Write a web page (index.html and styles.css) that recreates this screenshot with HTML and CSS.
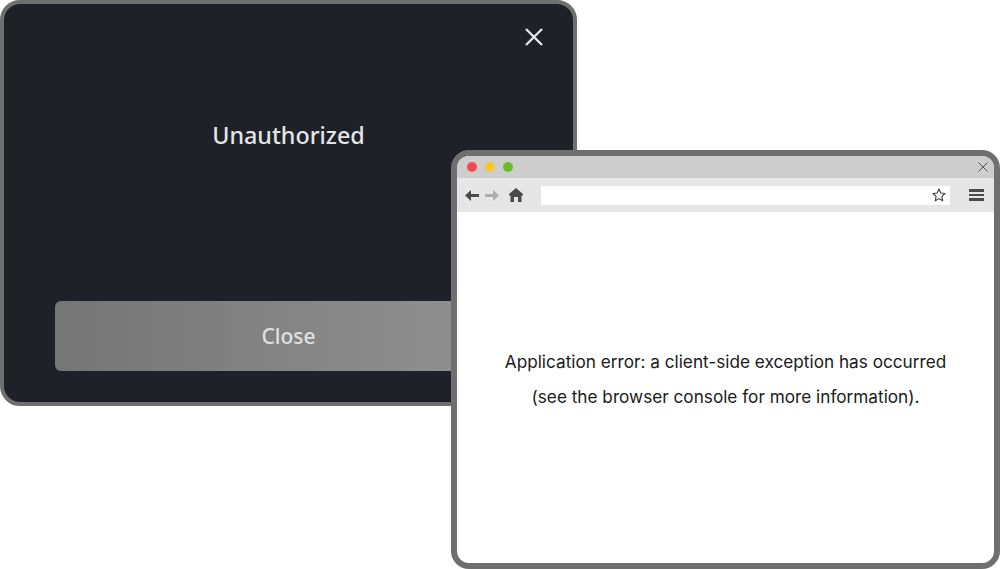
FILE: index.html
```html
<!DOCTYPE html>
<html lang="en">
<head>
<meta charset="utf-8">
<title>Application error</title>
<link rel="stylesheet" href="styles.css">
</head>
<body>
<div class="canvas">
  <section class="dialog">
    <div class="dialog-top">
      <span class="dialog-close">
        <svg width="20" height="20" viewBox="0 0 20 20"><path d="M2 2 18 18M18 2 2 18" stroke="#e4e5e6" stroke-width="2.4" fill="none"/></svg>
      </span>
    </div>
    <p class="dialog-title">Unauthorized</p>
    <button class="dialog-button">Close</button>
  </section>
  <section class="browser">
    <div class="titlebar">
      <span class="dot dot-red"></span>
      <span class="dot dot-yellow"></span>
      <span class="dot dot-green"></span>
      <svg class="win-x" width="10" height="10" viewBox="0 0 10 10"><path d="M.5.5 9.5 9.5M9.5.5.5 9.5" stroke="#555" stroke-width="1" fill="none"/></svg>
    </div>
    <div class="toolbar">
      <svg width="14" height="11" viewBox="0 0 14 11"><path d="M0 5.500 6 0V4H14V7H6V11Z" fill="#4a4a4a"/></svg>
      <svg class="fwd" width="14" height="11" viewBox="0 0 14 11"><path d="M14 5.500 8 0V4H0V7H8V11Z" fill="#adadad"/></svg>
      <svg class="home" width="14" height="14" viewBox="0 0 14 14"><path d="M7 0 14 6V7.500H12.500V14H9V9H5V14H1.500V7.500H0V6Z" fill="#4a4a4a"/></svg>
      <div class="address">
        <svg width="14" height="14" viewBox="0 0 14 14"><path d="M7 1 8.800 5 13 5.500 9.900 8.400 10.700 12.800 7 10.600 3.300 12.800 4.100 8.400 1 5.500 5.200 5Z" fill="#fff" stroke="#3c3c3c" stroke-width="1.100" stroke-linejoin="round"/></svg>
      </div>
      <div class="menu"><i></i><i></i><i></i></div>
    </div>
    <div class="page">
      <p>Application error: a client-side exception has occurred</p>
      <p>(see the browser console for more information).</p>
    </div>
  </section>
</div>
</body>
</html>
```
FILE: styles.css
```css
* { box-sizing: border-box; }
html, body { margin: 0; padding: 0; background: #fff; }
.canvas { position: relative; width: 1000px; height: 569px; overflow: hidden; }

.dialog {
  position: absolute; left: 0; top: 0; width: 577px; height: 406px;
  display: flex; flex-direction: column; align-items: center;
  background: #1e2128; border: 4px solid #6f6f6f; border-radius: 20px;
  padding: 0 51px 31px;
}
.dialog-top { align-self: stretch; height: 65px; display: flex; justify-content: flex-end; padding: 23px 0 0; margin-right: -22px; }
.dialog-close { display: block; width: 20px; height: 20px; }
.dialog-title {
  margin: 46px 0 0; color: #e4e5e6; font: 500 23.3px/40px "Noto Sans", sans-serif;
}
.dialog-button {
  margin-top: auto; width: 467px; height: 70px; border: 0; border-radius: 6px;
  background: linear-gradient(90deg, #757575, #939393);
  color: #e0e0e0; font: 500 21px/1 "Noto Sans", sans-serif;
}

.browser {
  position: absolute; left: 451px; top: 150px; width: 549px; height: 419px;
  display: flex; flex-direction: column; overflow: hidden;
  background: #fff; border: 6px solid #6f6f6f; border-radius: 18px;
}
.titlebar { height: 22px; flex: none; display: flex; align-items: center; gap: 8px; padding: 0 6px 0 10px; background: #cdcdcd; }
.dot { width: 10px; height: 10px; border-radius: 50%; }
.dot-red { background: #f14a50; }
.dot-yellow { background: #fbc52f; }
.dot-green { background: #6cbb2f; }
.win-x { margin-left: auto; }
.toolbar { height: 34px; flex: none; display: flex; align-items: center; padding: 0 10px 0 8px; background: #e6e6e6; }
.fwd { margin-left: 6px; }
.home { margin-left: 10px; }
.address { width: 409px; height: 19px; margin-left: 18px; display: flex; align-items: center; justify-content: flex-end; padding-right: 4px; background: #fff; }
.menu { margin-left: auto; width: 15px; display: flex; flex-direction: column; gap: 2px; }
.menu i { display: block; height: 2.500px; background: #4a4a4a; }
.page { flex: 1; padding-top: 132px; text-align: center; color: #1a1a1a; font: 400 17.2px/35px Inter, sans-serif; }
.page p { margin: 0; }
```
